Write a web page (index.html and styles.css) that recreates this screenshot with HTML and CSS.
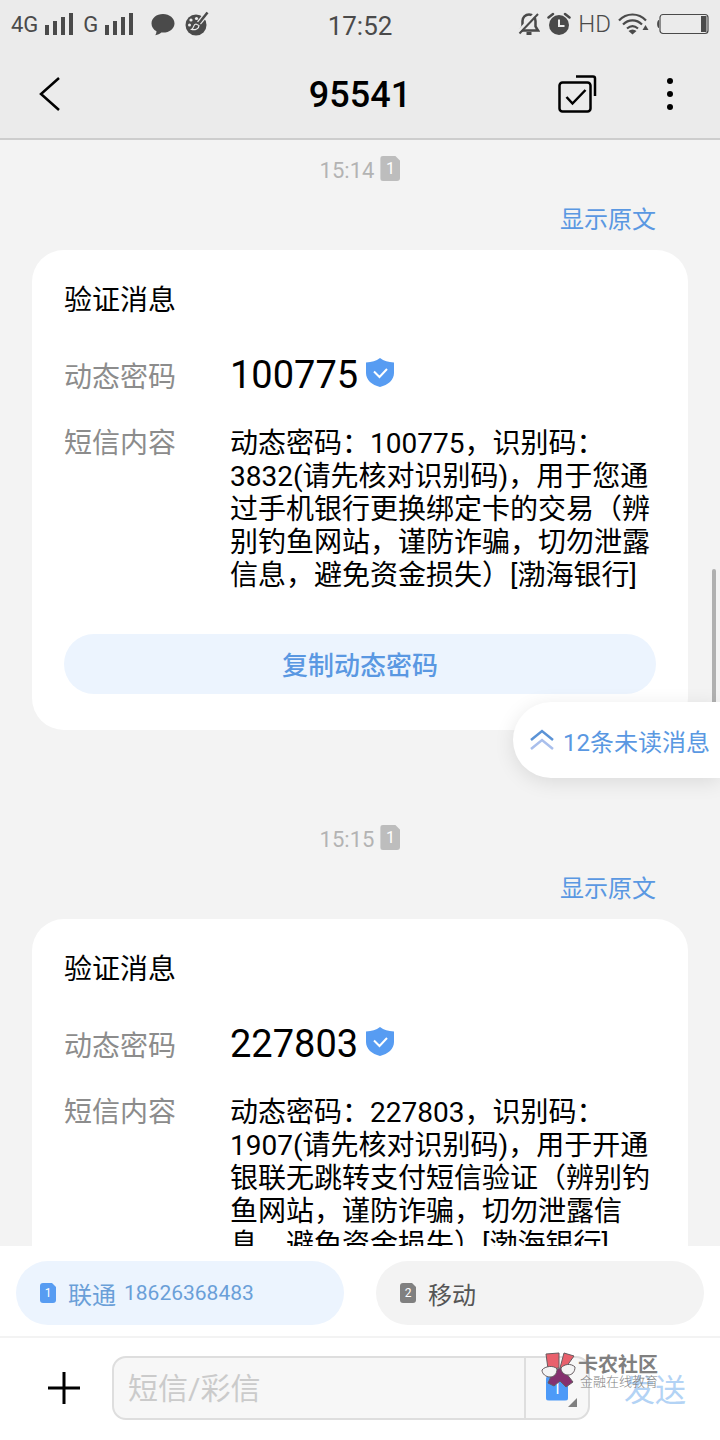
FILE: index.html
```html
<!DOCTYPE html>
<html lang="zh-CN">

<head>
    <meta charset="UTF-8">
    <meta name="viewport" content="width=device-width, initial-scale=1">
    <title>95541</title>
    <link rel="stylesheet" href="styles.css">
</head>

<body>
    <div class="phone">
        <div class="status-bar">
            <div class="status-left">
                <span class="network">4G</span>
                <svg class="signal" width="29" height="23" viewBox="0 0 29 23" fill="#4a4a4a">
                    <path d="M0 12h4v10H0zM8 8h4v14H8zM16 4h4v18h-4zM24 0h4v22h-4z"/>
                </svg>
                <span class="network">G</span>
                <svg class="signal" width="29" height="23" viewBox="0 0 29 23" fill="#4a4a4a">
                    <path d="M0 12h4v10H0zM8 8h4v14H8zM16 4h4v18h-4zM24 0h4v22h-4z"/>
                </svg>
                <svg class="bubble" width="24" height="24" viewBox="0 0 24 24" fill="#4a4a4a">
                    <path d="M12 2C5.400 2 .5 6.200.5 11.500c0 3.400 2 6.200 5 7.800 0 1.500-.4 2.700-1.200 4 2.500-.4 4.400-1.400 6-2.700h1.700c6.600 0 11.500-4 11.500-9.100S18.600 2 12 2z"/>
                </svg>
                <svg width="24" height="26" viewBox="0 0 24 26">
                    <circle cx="11" cy="14" r="10.500" fill="#4a4a4a"/>
                    <circle cx="6" cy="9" r="1.600" fill="#ebebeb"/>
                    <circle cx="11.500" cy="7.500" r="1.600" fill="#ebebeb"/>
                    <circle cx="4.500" cy="14" r="1.500" fill="#ebebeb"/>
                    <path d="M23 1 14 12" stroke="#ebebeb" stroke-width="5"/>
                    <path d="M22.500 1.500 12.500 14" stroke="#4a4a4a" stroke-width="2.500"/>
                    <path d="M11 13c-3 .5-1.500 3.500-4.500 5.500 4 .8 7.500-1 7.500-4z" fill="#4a4a4a" stroke="#ebebeb" stroke-width="1.200"/>
                </svg>
            </div>
            <div class="clock">17:52</div>
            <div class="status-right">
                <svg width="22" height="24" viewBox="0 0 22 24" fill="none" stroke="#4a4a4a" stroke-width="2.500">
                    <path d="M2 18.500h18l-2.500-4V9a6.500 6.500 0 0 0-13 0v5.500z"/>
                    <path d="M8.500 21.500h5" stroke-width="3"/>
                    <path d="M18 1 0 20" stroke="#ebebeb" stroke-width="3"/>
                    <path d="M20 2 1.500 21.500" stroke-width="2"/>
                </svg>
                <svg width="24" height="24" viewBox="0 0 24 24">
                    <circle cx="12" cy="13" r="10" fill="#4a4a4a"/>
                    <path d="M1.500 5.500 6 2M22.500 5.500 18 2" stroke="#4a4a4a" stroke-width="2.500" stroke-linecap="round"/>
                    <path d="M12 7.500V14h5.500" fill="none" stroke="#ebebeb" stroke-width="2"/>
                </svg>
                <span class="hd">HD</span>
                <svg width="31" height="24" viewBox="0 0 31 24" fill="none" stroke="#4a4a4a" stroke-width="2.200">
                    <path d="M1 8.500c7.500-8 19.500-8 27 0M5 12.500c5.500-5.500 13.500-5.500 19 0M9 16.500c3.500-3 7.500-3 11 0"/>
                    <path d="M10.500 19c2.500-2 5.500-2 8 0l-4 3.500z" fill="#4a4a4a" stroke="none"/>
                    <path d="M24.500 18h6l-3-5z" fill="#4a4a4a" stroke="none"/>
                </svg>
                <svg width="53" height="22" viewBox="0 0 53 22">
                    <path d="M3 7C.5 7 .5 15 3 15z" fill="#4a4a4a"/>
                    <rect x="4" y="1.500" width="48" height="19" rx="3" fill="none" stroke="#4a4a4a" stroke-width="1.200"/>
                    <path d="M45 3h5.500v16H45z" fill="#4a4a4a"/>
                </svg>
            </div>
        </div>

        <header class="title-bar">
            <button class="icon-btn back" aria-label="返回">
                <svg width="24" height="36" viewBox="0 0 24 36" fill="none" stroke="#000" stroke-width="2.500">
                    <path d="M21 2 3 18l18 16"/>
                </svg>
            </button>
            <h1>95541</h1>
            <div class="title-actions">
                <button class="icon-btn" aria-label="选择">
                    <svg width="40" height="40" viewBox="0 0 40 40" fill="none" stroke="#000" stroke-width="2.500">
                        <rect x="1.500" y="8.500" width="31" height="29" rx="3"/>
                        <path d="M18 2.500h17q2 0 2 2V22M8.500 23l6 6.500 13-13.500"/>
                    </svg>
                </button>
                <button class="icon-btn" aria-label="更多">
                    <svg width="8" height="34" viewBox="0 0 8 34">
                        <circle cx="4" cy="4" r="3"/>
                        <circle cx="4" cy="17" r="3"/>
                        <circle cx="4" cy="30" r="3"/>
                    </svg>
                </button>
            </div>
        </header>

        <main class="chat">
            <section class="message">
                <div class="time">15:14 <span class="sim sim-gray">1</span></div>
                <a class="original" href="#">显示原文</a>
                <div class="card">
                    <h2>验证消息</h2>
                    <div class="row code-row">
                        <span class="label">动态密码</span>
                        <span class="code">100775</span>
                        <svg class="shield" width="28" height="30" viewBox="0 0 28 30">
                            <path d="M14 0c4 3 8 4 14 4.500V15c0 7-6 12-14 14C6 27 0 22 0 15V4.500C6 4 10 3 14 0z" fill="#579cf2"/>
                            <path d="m8 13.500 5.500 5.500 7.500-8" fill="none" stroke="#fff" stroke-width="2"/>
                        </svg>
                    </div>
                    <div class="row">
                        <span class="label">短信内容</span>
                        <p class="content">动态密码：100775，识别码：3832(请先核对识别码)，用于您通过手机银行更换绑定卡的交易（辨别钓鱼网站，谨防诈骗，切勿泄露信息，避免资金损失）[渤海银行]</p>
                    </div>
                    <button class="copy-btn">复制动态密码</button>
                </div>
            </section>

            <section class="message">
                <div class="time">15:15 <span class="sim sim-gray">1</span></div>
                <a class="original" href="#">显示原文</a>
                <div class="card">
                    <h2>验证消息</h2>
                    <div class="row code-row">
                        <span class="label">动态密码</span>
                        <span class="code">227803</span>
                        <svg class="shield" width="28" height="30" viewBox="0 0 28 30">
                            <path d="M14 0c4 3 8 4 14 4.500V15c0 7-6 12-14 14C6 27 0 22 0 15V4.500C6 4 10 3 14 0z" fill="#579cf2"/>
                            <path d="m8 13.500 5.500 5.500 7.500-8" fill="none" stroke="#fff" stroke-width="2"/>
                        </svg>
                    </div>
                    <div class="row">
                        <span class="label">短信内容</span>
                        <p class="content">动态密码：227803，识别码：1907(请先核对识别码)，用于开通银联无跳转支付短信验证（辨别钓鱼网站，谨防诈骗，切勿泄露信息，避免资金损失）[渤海银行]</p>
                    </div>
                </div>
            </section>

            <div class="scrollbar"></div>
            <button class="unread">
                <svg width="24" height="22" viewBox="0 0 24 22" fill="none" stroke-width="2.500">
                    <path d="M1 11 12 2l11 9" stroke="#5b93d6"/>
                    <path d="m1 20 11-9 11 9" stroke="#a9bfec"/>
                </svg>
                12条未读消息
            </button>
        </main>

        <footer class="footer">
            <div class="sim-row">
                <button class="sim-btn active">
                    <span class="sim sim-small">1</span>联通 <span class="number">18626368483</span>
                </button>
                <button class="sim-btn">
                    <span class="sim sim-small">2</span>移动
                </button>
            </div>
            <div class="compose">
                <button class="icon-btn" aria-label="添加">
                    <svg width="34" height="34" viewBox="0 0 34 34" stroke="#000" stroke-width="3">
                        <path d="M17 1v32M1 17h32"/>
                    </svg>
                </button>
                <div class="input-box">
                    <input type="text" placeholder="短信/彩信" aria-label="短信/彩信">
                    <button class="sim-pick" aria-label="选择卡">
                        <span class="sim sim-blue">1</span>
                    </button>
                </div>
                <button class="send">发送</button>

                <div class="badge">
                    <svg width="36" height="38" viewBox="0 0 36 38" stroke="#665b60" stroke-width="1">
                        <path d="m5 2 13-1v15l-11 1z" fill="#e9606c"/>
                        <path d="m23 1 10 3-10 14-4-2z" fill="#e9606c"/>
                        <path d="m13 18 8-2 11 14-7 5-6-6-6 5-6-3z" fill="#85306f"/>
                        <path d="M1 18c3-4 12-5 15-1 0 5-3 8-7 8s-8-3-8-7z" fill="#f4f4f4"/>
                        <path d="M20 16c3-4 10-5 14-1 0 5-3 8-7 8s-7-3-7-7z" fill="#f4f4f4"/>
                    </svg>
                    <div>
                        <div class="badge-name">卡农社区</div>
                        <div class="badge-sub">金融在线教育</div>
                    </div>
                </div>
            </div>
        </footer>
    </div>
</body>

</html>
```

FILE: styles.css
```css
* {
    box-sizing: border-box;
}

body {
    margin: 0;
    font-family: Roboto, "Noto Sans CJK SC", sans-serif;
    background: #f3f3f3;
    color: #000;
}

button,
input {
    font-family: inherit;
    border: none;
    background: none;
    padding: 0;
    margin: 0;
    color: inherit;
}

svg {
    display: block;
    flex: none;
}

h1,
h2,
p {
    margin: 0;
    font-weight: 400;
}

.phone {
    height: 100vh;
    display: flex;
    flex-direction: column;
}

/* status bar */
.status-bar {
    height: 50px;
    display: grid;
    grid-template-columns: 1fr auto 1fr;
    align-items: center;
    padding: 0 11px 2px;
    background: #ebebeb;
    color: #4a4a4a;
}

.status-left,
.status-right {
    display: flex;
    align-items: center;
}

.status-right {
    justify-content: flex-end;
    gap: 7px;
}

.network {
    font-size: 22px;
}

.signal {
    margin: 0 9px 0 7px;
}

.bubble {
    margin: 0 10px 0 8px;
}

.clock {
    font-size: 26px;
    padding-top: 4px;
}

.hd {
    font-size: 24px;
    font-weight: 300;
}

/* title bar */
.title-bar {
    height: 90px;
    display: grid;
    grid-template-columns: 1fr auto 1fr;
    align-items: center;
    padding: 0 38px;
    background: #ebebeb;
    border-bottom: 2px solid #cdcdcd;
}

.title-bar h1 {
    padding-top: 2px;
    font-size: 36px;
    font-weight: 500;
}

.icon-btn {
    display: flex;
    cursor: pointer;
}

.back {
    justify-self: start;
}

.title-actions {
    display: flex;
    align-items: center;
    justify-content: flex-end;
    gap: 68px;
    padding-right: 8px;
}

/* messages */
.chat {
    flex: 1;
    min-height: 0;
    position: relative;
    overflow: hidden;
    padding: 14px 32px 0;
}

.message {
    display: flex;
    flex-direction: column;
    margin-bottom: 93px;
}

.time {
    display: flex;
    justify-content: center;
    align-items: center;
    gap: 6px;
    height: 32px;
    font-size: 22px;
    color: #b3b3b3;
}

.original {
    align-self: flex-end;
    margin: 17px 32px 13px;
    font-size: 24px;
    line-height: 34px;
    color: #5a98e2;
    text-decoration: none;
}

.card {
    background: #fff;
    border-radius: 32px;
    padding: 34px 32px 36px;
}

.card h2 {
    font-size: 28px;
    line-height: 34px;
}

.row {
    display: flex;
    align-items: flex-start;
    font-size: 28px;
    line-height: 33px;
}

.code-row {
    align-items: center;
    height: 44px;
    margin: 35px 0 30px;
}

.label {
    flex: none;
    width: 166px;
    color: #8c8c8c;
}

.code-row .label {
    padding-top: 5px;
}

.code {
    font-size: 38px;
}

.shield {
    margin: 0 0 4px 8px;
}

.content {
    flex: 1;
}

.copy-btn {
    width: 100%;
    height: 60px;
    margin-top: 42px;
    padding-bottom: 2px;
    border-radius: 30px;
    background: #ecf4fe;
    color: #5a98e2;
    font-size: 26px;
    font-weight: 500;
}

/* sim card badges */
.sim {
    flex: none;
    display: flex;
    align-items: center;
    justify-content: center;
    width: 20px;
    height: 25px;
    border-radius: 3px;
    clip-path: polygon(0 0, 75% 0, 100% 20%, 100% 100%, 0 100%);
    color: #fff;
    font-size: 16px;
}

.sim-gray {
    margin-bottom: 3px;
    background: #bdbdbd;
}

.sim-small {
    width: 16px;
    height: 20px;
    margin-right: 12px;
    background: #808080;
    font-size: 12px;
}

.sim-blue {
    width: 22px;
    background: #4d9af8;
}

/* overlays */
.scrollbar {
    position: absolute;
    top: 429px;
    right: 4px;
    width: 4px;
    height: 150px;
    border-radius: 2px;
    background: #b0b0b0;
}

.unread {
    position: absolute;
    top: 562px;
    right: 0;
    display: flex;
    align-items: center;
    gap: 9px;
    height: 76px;
    padding: 0 10px 0 17px;
    border-radius: 38px 0 0 38px;
    background: #fff;
    box-shadow: 0 4px 20px rgba(0, 0, 0, 0.1);
    color: #5a98e2;
    font-size: 24px;
}

/* bottom area */
.footer {
    background: #fff;
}

.sim-row {
    display: flex;
    gap: 32px;
    padding: 15px 16px 11px;
    border-bottom: 2px solid #f3f3f3;
}

.sim-btn {
    flex: 1;
    display: flex;
    align-items: center;
    height: 64px;
    padding: 0 24px;
    border-radius: 32px;
    background: #f3f3f3;
    color: #555;
    font-size: 24px;
}

.sim-btn.active {
    background: #ecf4fe;
    color: #6a9fd8;
}

.sim-btn.active .sim {
    background: #579cf2;
}

.number {
    margin-left: 8px;
    font-size: 21px;
}

.compose {
    position: relative;
    display: flex;
    align-items: center;
    padding: 18px 34px 20px 47px;
}

.input-box {
    flex: 1;
    display: flex;
    height: 64px;
    margin: 0 34px 0 31px;
    border: 2px solid #dedede;
    border-radius: 14px;
    background: #f7f7f7;
}

.input-box input {
    flex: 1;
    min-width: 0;
    padding-left: 14px;
    font-size: 30px;
}

.input-box input::placeholder {
    color: #cbcbcb;
}

.sim-pick {
    position: relative;
    display: flex;
    align-items: center;
    justify-content: center;
    width: 64px;
    border-left: 2px solid #dedede;
}

.sim-pick::after {
    content: "";
    position: absolute;
    right: 11px;
    bottom: 11px;
    border-left: 9px solid transparent;
    border-bottom: 9px solid #808080;
}

.send {
    padding-bottom: 2px;
    color: #b3d3f5;
    font-size: 31px;
}

.badge {
    position: absolute;
    top: 14px;
    right: 62px;
    display: flex;
    gap: 1px;
    color: #808080;
    pointer-events: none;
}

.badge-name {
    font-size: 20px;
    font-weight: 700;
    line-height: 20px;
    padding-top: 3px;
}

.badge-sub {
    font-size: 13px;
    font-weight: 300;
    line-height: 14px;
    padding-left: 2px;
}
```
